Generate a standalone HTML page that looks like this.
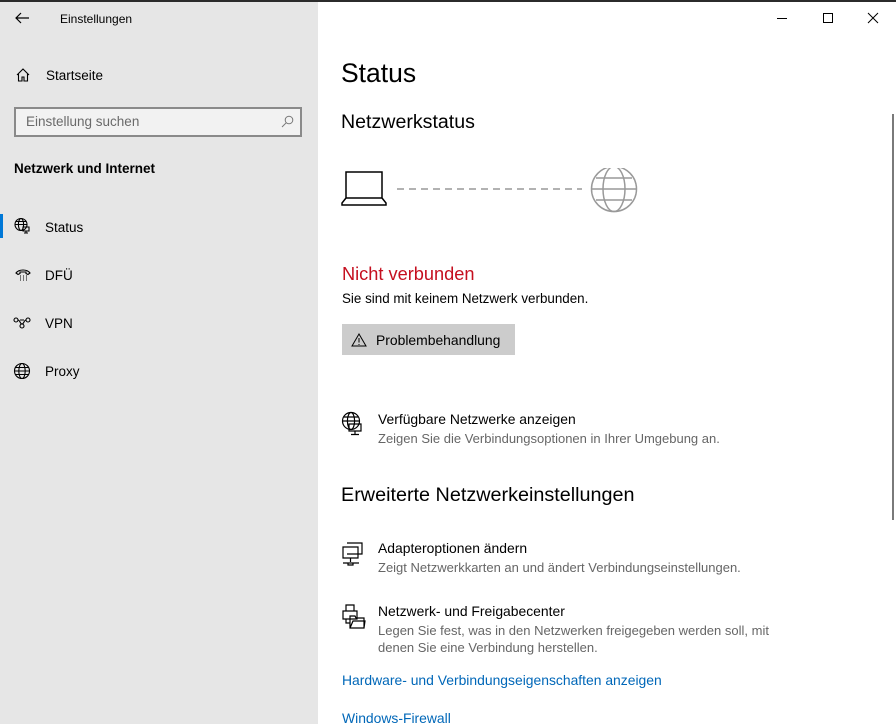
<!DOCTYPE html>
<html><head><meta charset="utf-8"><style>
*{margin:0;padding:0;box-sizing:border-box}
body{width:896px;height:724px;overflow:hidden;font-family:"Liberation Sans",sans-serif;background:#fff;position:relative;color:#000}
.side{position:absolute;left:0;top:0;width:318px;height:724px;background:#e6e6e6}
.topbar{position:absolute;left:0;top:0;width:896px;height:2px;background:#2b2b2b}
.a{position:absolute;white-space:nowrap}
svg{position:absolute}
.sub{font-size:13px;color:#666}
.link{color:#0067b8;font-size:13.9px}
</style></head><body>
<div class="side"></div>
<div class="topbar"></div>
<svg style="left:14px;top:11px" width="16" height="14" viewBox="0 0 16 14"><path d="M15 7H2M7 2L2 7l5 5" fill="none" stroke="#000" stroke-width="1.2"/></svg>
<div class="a" style="left:60px;top:12px;font-size:12px">Einstellungen</div>
<svg style="left:15px;top:67px" width="16" height="16" viewBox="0 0 16 16"><path d="M2 8L8 2l6 6M3.5 7v7h3.5v-4h2v4h3.5V7" fill="none" stroke="#000" stroke-width="1.1"/></svg>
<div class="a" style="left:46px;top:68px;font-size:13.5px">Startseite</div>
<div class="a" style="left:14px;top:107px;width:288px;height:30px;border:2px solid #8a8a8a;background:#f2f2f2"></div>
<div class="a" style="left:26px;top:114px;font-size:13.5px;color:#6a6a6a">Einstellung suchen</div>
<svg style="left:281px;top:115px" width="13" height="13" viewBox="0 0 13 13"><circle cx="8" cy="5" r="3.8" fill="none" stroke="#777"/><path d="M5.3 7.7L1 12" stroke="#777"/></svg>
<div class="a" style="left:14px;top:161px;font-size:13.5px;font-weight:bold">Netzwerk und Internet</div>
<div class="a" style="left:0;top:214px;width:3px;height:24px;background:#0078d7"></div>
<svg style="left:13px;top:217px" width="18" height="18" viewBox="0 0 18 18" fill="none" stroke="#000" stroke-width="1.1"><circle cx="8" cy="7.5" r="6"/><ellipse cx="8" cy="7.5" rx="2.6" ry="6"/><path d="M2 7.5h12M3 4.5h10"/><path d="M10 10h6v4h-6zM13 14v2M11 16h4"/></svg>
<div class="a" style="left:45px;top:220px;font-size:13.5px">Status</div>
<svg style="left:15px;top:267px" width="16" height="16" viewBox="0 0 16 16" fill="none" stroke="#000" stroke-width="1.1"><path d="M1 6c3-4 11-4 14 0l-2 1.5-2-1V5H5v1.5l-2 1z"/><path d="M5 9h1M8 9h1M11 9h1M5 11h1M8 11h1M11 11h1M5 13h1M8 13h1M11 13h1"/></svg>
<div class="a" style="left:45px;top:268px;font-size:13.5px">DFÜ</div>
<svg style="left:13px;top:316px" width="18" height="14" viewBox="0 0 18 14" fill="none" stroke="#000" stroke-width="1.1"><circle cx="3" cy="4" r="2"/><circle cx="15" cy="4" r="2"/><circle cx="9" cy="10" r="2"/><path d="M5 4c2 0 2 4 4 4M13 4c-2 0-2 4-4 4M7 4h4"/></svg>
<div class="a" style="left:45px;top:316px;font-size:13.5px">VPN</div>
<svg style="left:13px;top:362px" width="18" height="18" viewBox="0 0 18 18" fill="none" stroke="#000" stroke-width="1.1"><circle cx="9" cy="9" r="7.5"/><ellipse cx="9" cy="9" rx="3.2" ry="7.5"/><path d="M1.5 9h15M2.5 5.5h13M2.5 12.5h13"/></svg>
<div class="a" style="left:45px;top:364px;font-size:13.5px">Proxy</div>

<svg style="left:774px;top:10px" width="110" height="16" viewBox="0 0 110 16" fill="none" stroke="#000" stroke-width="1"><path d="M3 8.5h10"/><rect x="49.5" y="3.5" width="9" height="9"/><path d="M94 3l10 10M104 3L94 13"/></svg>
<div class="a" style="left:892px;top:114px;width:2px;height:406px;background:#7a7a7a"></div>

<div class="a" style="left:341px;top:58px;font-size:26.5px">Status</div>
<div class="a" style="left:341px;top:111px;font-size:19.6px">Netzwerkstatus</div>
<svg style="left:340px;top:168px" width="300" height="48" viewBox="0 0 300 48" fill="none"><path d="M6 4h36v26H6zM6 30L2 35v2h44v-2l-4-5" stroke="#000" stroke-width="1.5"/><path d="M57 21H242" stroke="#999" stroke-width="1.5" stroke-dasharray="7 5"/><g stroke="#999" stroke-width="1.5"><circle cx="274" cy="21" r="22.5"/><ellipse cx="274" cy="21" rx="11" ry="22.5"/><path d="M251.5 21h45M256 10h36M256 32h36"/></g></svg>
<div class="a" style="left:342px;top:264px;font-size:18.2px;color:#c50f1f">Nicht verbunden</div>
<div class="a" style="left:342px;top:291px;font-size:13.4px">Sie sind mit keinem Netzwerk verbunden.</div>
<div class="a" style="left:342px;top:324px;width:173px;height:31px;background:#cccccc"></div>
<svg style="left:351px;top:333px" width="16" height="14" viewBox="0 0 16 14" fill="none" stroke="#000" stroke-width="1"><path d="M8 1L1 13h14z M8 5v4.5M8 11v1"/></svg>
<div class="a" style="left:376px;top:332px;font-size:13.9px">Problembehandlung</div>

<svg style="left:341px;top:411px" width="24" height="26" viewBox="0 0 24 26" fill="none" stroke="#000" stroke-width="1.2"><circle cx="10" cy="10" r="8.5"/><ellipse cx="10" cy="10" rx="3.6" ry="8.5"/><path d="M1.5 10h17M3 6h14"/><path d="M8 13h12v7H8zM14 20v3M10 23.5h8"/></svg>
<div class="a" style="left:378px;top:411px;font-size:13.9px">Verfügbare Netzwerke anzeigen</div>
<div class="a sub" style="left:378px;top:431px">Zeigen Sie die Verbindungsoptionen in Ihrer Umgebung an.</div>

<div class="a" style="left:341px;top:484px;font-size:19.8px">Erweiterte Netzwerkeinstellungen</div>
<svg style="left:342px;top:542px" width="24" height="26" viewBox="0 0 24 26" fill="none" stroke="#000" stroke-width="1.2"><path d="M5 1h15v11H5"/><path d="M1 5h15v11H1zM8.5 16v4M1 21h16M6 21h5v2H6z"/></svg>
<div class="a" style="left:378px;top:540px;font-size:13.9px">Adapteroptionen ändern</div>
<div class="a sub" style="left:378px;top:560px">Zeigt Netzwerkkarten an und ändert Verbindungseinstellungen.</div>
<svg style="left:342px;top:604px" width="24" height="26" viewBox="0 0 24 26" fill="none" stroke="#000" stroke-width="1.2"><path d="M4 1h8v6H4zM1 7h14v8H1zM4 15v4h4"/><path d="M8 12h5l1 2h8v10H8zM8 24l3-7h12l-1 7"/></svg>
<div class="a" style="left:378px;top:603px;font-size:13.9px">Netzwerk- und Freigabecenter</div>
<div class="a sub" style="left:378px;top:623px">Legen Sie fest, was in den Netzwerken freigegeben werden soll, mit</div>
<div class="a sub" style="left:378px;top:640px">denen Sie eine Verbindung herstellen.</div>
<div class="a link" style="left:342px;top:672px">Hardware- und Verbindungseigenschaften anzeigen</div>
<div class="a link" style="left:342px;top:710px">Windows-Firewall</div>
</body></html>
